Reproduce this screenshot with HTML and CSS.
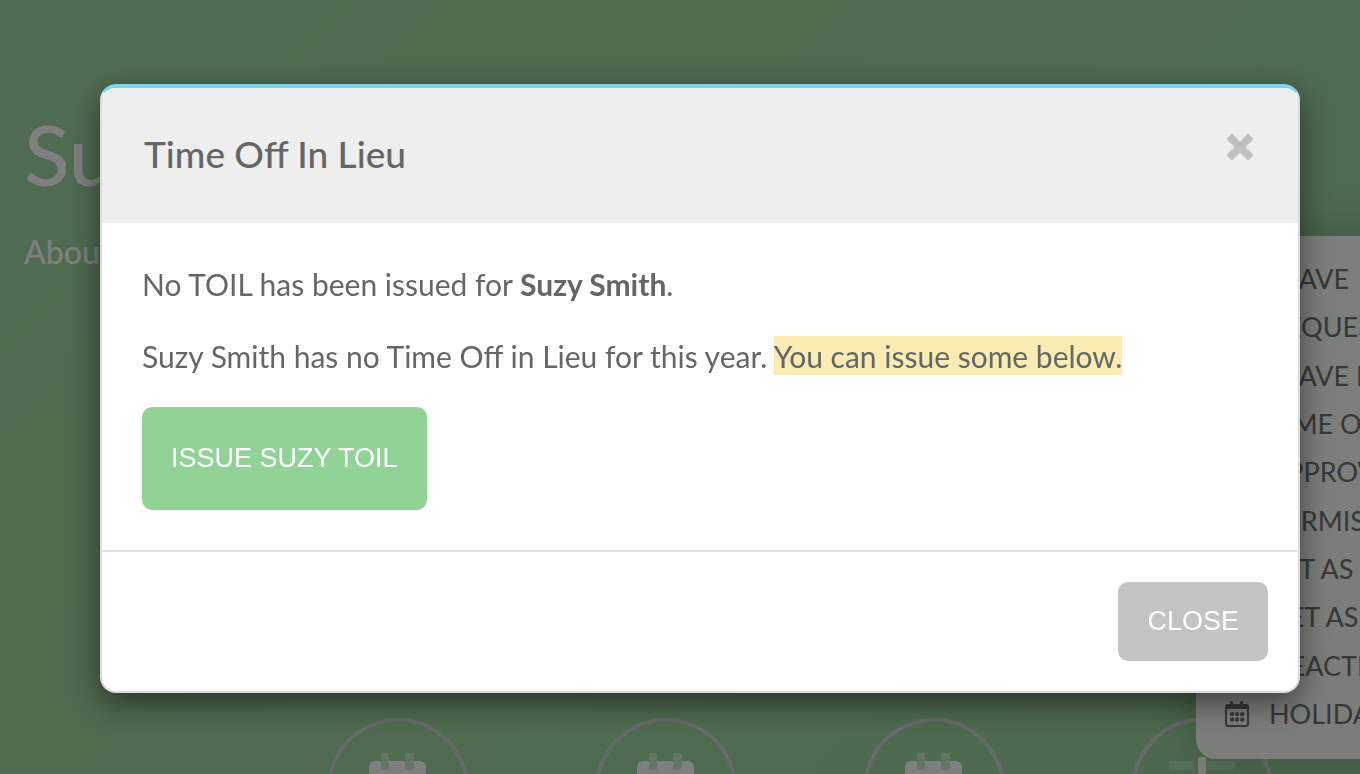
FILE: index.html
```html
<!doctype html>
<html lang="en">
<head>
	<meta charset="UTF-8">
	<meta name="viewport" content="width=device-width, initial-scale=1">
	<title>Time Off In Lieu</title>
	<link rel="stylesheet" href="styles.css">
</head>
<body>
	<svg class="sprite" aria-hidden="true">
		<symbol id="icon-calendar" viewBox="0 0 24 28">
			<path fill-rule="evenodd" d="M5 2.500a1.500 1.500 0 0 1 3 0V4h7V2.500a1.500 1.500 0 0 1 3 0V4h3a3 3 0 0 1 3 3v17a3 3 0 0 1-3 3H3a3 3 0 0 1-3-3V7a3 3 0 0 1 3-3h2zM2 9v15a1 1 0 0 0 1 1h18a1 1 0 0 0 1-1V9z"/>
			<path d="M5 13.200a1 1 0 0 1 1-1h2a1 1 0 0 1 1 1v1.800a1 1 0 0 1-1 1h-2a1 1 0 0 1-1-1zM10.200 13.200a1 1 0 0 1 1-1h1.800a1 1 0 0 1 1 1v1.800a1 1 0 0 1-1 1h-1.800a1 1 0 0 1-1-1zM15.200 13.200a1 1 0 0 1 1-1h2a1 1 0 0 1 1 1v1.800a1 1 0 0 1-1 1h-2a1 1 0 0 1-1-1zM5 18.600a1 1 0 0 1 1-1h2a1 1 0 0 1 1 1v1.800a1 1 0 0 1-1 1h-2a1 1 0 0 1-1-1zM10.200 18.600a1 1 0 0 1 1-1h1.800a1 1 0 0 1 1 1v1.800a1 1 0 0 1-1 1h-1.800a1 1 0 0 1-1-1zM15.200 18.600a1 1 0 0 1 1-1h2a1 1 0 0 1 1 1v1.800a1 1 0 0 1-1 1h-2a1 1 0 0 1-1-1z"/>
		</symbol>
		<symbol id="icon-day" viewBox="0 0 58 70">
			<rect class="tone-full" y="8" width="57" height="62" rx="6"/>
			<rect class="tone-soft" x="12" width="8" height="17" rx="2"/>
			<rect class="tone-soft" x="36" width="9" height="17" rx="2"/>
		</symbol>
		<symbol id="icon-sliders" viewBox="0 0 66 66">
			<path class="tone-dim" d="M2 4h23v9H2a2 2 0 0 1-2-2V6a2 2 0 0 1 2-2zM38 4h26a2 2 0 0 1 2 2v5a2 2 0 0 1-2 2H38z"/>
			<rect class="tone-full" x="29" width="8" height="17" rx="2"/>
		</symbol>
	</svg>

	<div class="page">
		<header class="profile">
			<h1>Suzy</h1>
			<p>About</p>
		</header>
		<div class="shortcuts">
			<div class="shortcut"><svg class="day"><use href="#icon-day"/></svg></div>
			<div class="shortcut"><svg class="day"><use href="#icon-day"/></svg></div>
			<div class="shortcut"><svg class="day"><use href="#icon-day"/></svg></div>
			<div class="shortcut"><svg class="sliders"><use href="#icon-sliders"/></svg></div>
		</div>
		<nav class="menu">
			<a href="#"><svg><use href="#icon-calendar"/></svg>LEAVE</a>
			<a href="#"><svg><use href="#icon-calendar"/></svg>REQUESTS</a>
			<a href="#"><svg><use href="#icon-calendar"/></svg>LEAVE REPORT</a>
			<a href="#"><svg><use href="#icon-calendar"/></svg>TIME OFF IN LIEU</a>
			<a href="#"><svg><use href="#icon-calendar"/></svg>APPROVERS</a>
			<a href="#"><svg><use href="#icon-calendar"/></svg>PERMISSIONS</a>
			<a href="#"><svg><use href="#icon-calendar"/></svg>SET AS</a>
			<a href="#"><svg><use href="#icon-calendar"/></svg>GET AS</a>
			<a href="#"><svg><use href="#icon-calendar"/></svg>DEACTIVATE</a>
			<a href="#"><svg><use href="#icon-calendar"/></svg>HOLIDAYS</a>
		</nav>
	</div>

	<div class="overlay">
		<div class="modal" role="dialog" aria-modal="true" aria-labelledby="modal-title">
			<div class="modal-header">
				<h2 id="modal-title">Time Off In Lieu</h2>
				<button type="button" class="dismiss" aria-label="Close dialog">
					<svg viewBox="0 0 28 28"><path d="M6 0.500 14 8.500 22 0.500 27.500 6 19.500 14 27.500 22 22 27.500 14 19.500 6 27.500 0.500 22 8.500 14 0.500 6z"/></svg>
				</button>
			</div>
			<div class="modal-body">
				<p>No TOIL has been issued for <strong>Suzy Smith</strong>.</p>
				<p>Suzy Smith has no Time Off in Lieu for this year. <mark>You can issue some below.</mark></p>
				<button type="button" class="btn btn-issue">ISSUE SUZY TOIL</button>
			</div>
			<div class="modal-footer">
				<button type="button" class="btn btn-close">CLOSE</button>
			</div>
		</div>
	</div>
</body>
</html>
```

FILE: styles.css
```css
*{
	box-sizing: border-box;
}
body{
	margin: 0;
	overflow: hidden;
	font-family: Lato, "Open Sans", sans-serif;
	color: #666;
}
h1, h2, p{
	margin: 0;
}
.sprite{
	display: none;
}

/* page behind the dialog */
.page{
	position: relative;
	height: 100vh;
	overflow: hidden;
	background: linear-gradient(135deg, #a0daa8 0%, #9ed49e 25%, #9ed6a2 60%, #98d09c 100%);
}
.profile{
	height: 718px;
	padding: 98px 24px 0;
	color: #fff;
}
.profile h1{
	font-size: 84px;
	line-height: 112px;
	font-weight: 500;
}
.profile p{
	margin-top: 20px;
	font-size: 32px;
	line-height: 44px;
	font-weight: 500;
}
.shortcuts{
	display: grid;
	grid-template-columns: repeat(4, 1fr);
	justify-items: center;
	padding: 0 24px 0 264px;
}
.shortcut{
	display: flex;
	justify-content: center;
	width: 142px;
	height: 142px;
	padding-top: 31px;
	border: 4px solid #cad6ce;
	border-radius: 50%;
}
.day{
	width: 58px;
	height: 70px;
}
.sliders{
	width: 66px;
	height: 66px;
	margin-top: 4px;
}
.tone-full{
	fill: #fff;
}
.tone-soft{
	fill: #c6eac9;
}
.tone-dim{
	fill: #b4dcb7;
}

.menu{
	display: flex;
	flex-direction: column;
	justify-content: space-between;
	position: absolute;
	top: 236px;
	right: -200px;
	width: 364px;
	height: 523px;
	padding: 19px 30px 21px 29px;
	border-radius: 20px;
	background: rgba(250, 253, 249, .96);
	box-shadow: 0 0 50px rgba(0, 0, 0, .2);
}
.menu a{
	display: flex;
	align-items: center;
	gap: 20px;
	font-size: 27px;
	line-height: 48px;
	color: #707070;
	text-decoration: none;
	white-space: nowrap;
}
.menu svg{
	width: 24px;
	height: 28px;
	fill: currentColor;
}

/* dialog */
.overlay{
	position: fixed;
	inset: 0;
	padding: 84px 60px 0 100px;
	background: rgba(0, 0, 0, .5);
}
.modal{
	border: 2px solid #dcdcdc;
	border-top: 4px solid #7ad4ec;
	border-radius: 16px;
	background: #fff;
	box-shadow: 0 10px 30px rgba(0, 0, 0, .5);
	overflow: hidden;
}
.modal-header{
	display: flex;
	justify-content: space-between;
	align-items: flex-start;
	padding: 42px 41px 45px 42px;
	background: #eee;
}
.modal-header h2{
	font-size: 37px;
	line-height: 48px;
	font-weight: 500;
}
.dismiss{
	padding: 3px;
	border: 0;
	background: none;
}
.dismiss svg{
	display: block;
	width: 28px;
	height: 28px;
	fill: #bfbfbf;
}
.modal-body{
	padding: 40px;
	font-size: 30px;
	line-height: 42px;
}
.modal-body p{
	margin-bottom: 30px;
}
.modal-body mark{
	padding: 2px 0 1px;
	background: #f9ebb2;
	color: inherit;
}
.btn{
	display: block;
	padding: 0 29px;
	border: 0;
	border-radius: 10px;
	font-family: "Liberation Sans", Arial, sans-serif;
	font-size: 27px;
	color: #fff;
}
.btn-issue{
	height: 103px;
	background: #91d396;
}
.btn-close{
	height: 79px;
	background: #c3c3c3;
}
.modal-footer{
	display: flex;
	justify-content: flex-end;
	padding: 30px;
	border-top: 2px solid #e4e4e4;
}
```
